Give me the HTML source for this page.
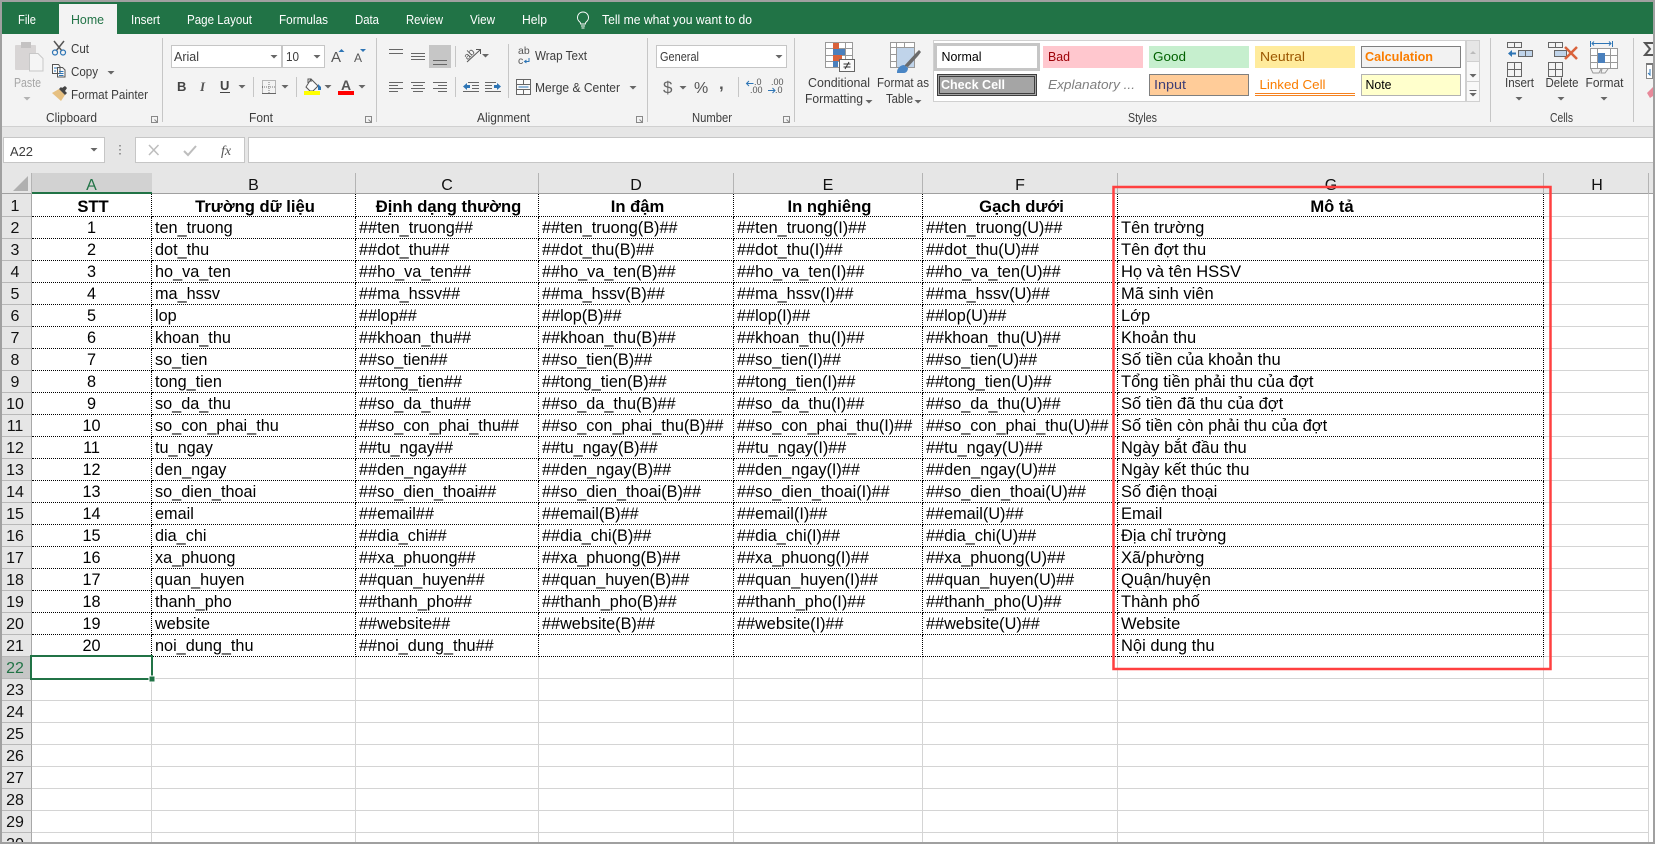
<!DOCTYPE html>
<html><head><meta charset="utf-8"><title>Excel</title>
<style>
html,body{margin:0;padding:0;width:1655px;height:844px;overflow:hidden;background:#fff;font-family:"Liberation Sans","Noto Sans CJK SC",sans-serif}
#g{position:absolute;left:0;top:194px;width:1655px;height:648px;overflow:hidden}
table{position:absolute;left:2px;top:0;border-collapse:separate;border-spacing:0;table-layout:fixed;width:1647px;font-size:16.25px;color:#000}
td{height:22px;padding:2px 0 0 3px;box-sizing:border-box;line-height:19px;white-space:nowrap;border-right:1px solid #d4d4d4;border-bottom:1px solid #d4d4d4}
td:first-child{background:#e6e6e6;border-right:1px solid #a8a8a8;border-bottom:1px solid #b8b8b8;text-align:center;padding:2px 3px 0 0;color:#111;font-size:16px}
tr.r td:not(:first-child):not(:last-child){border-right:1px dotted #000;border-bottom:1px dotted #000}
td:nth-child(8){font-size:16.5px}
tr.h td{height:23px;line-height:18px;padding-top:4px;font-weight:bold;text-align:center;font-size:16.6px}
tr.h td:first-child{font-weight:normal;font-size:16px}
td.c{text-align:center;padding:2px 0 0 0}
td.s{background:#c6c6c6!important;color:#217346!important}
svg{position:absolute;left:0;top:0}
text{font-family:"Liberation Sans",sans-serif;font-size:12.5px;fill:#3c3c3c}
</style></head><body>
<div id="g"><table>
<colgroup><col style="width:30px"><col style="width:120px"><col style="width:204px"><col style="width:183px"><col style="width:195px"><col style="width:189px"><col style="width:195px"><col style="width:426px"><col style="width:105px"></colgroup>
<tr class="r h"><td>1</td><td>STT</td><td>Trường dữ liệu</td><td>Định dạng thường</td><td>In đậm</td><td>In nghiêng</td><td>Gạch dưới</td><td>Mô tả</td><td></td></tr>
<tr class="r"><td>2</td><td class="c">1</td><td>ten_truong</td><td>##ten_truong##</td><td>##ten_truong(B)##</td><td>##ten_truong(I)##</td><td>##ten_truong(U)##</td><td>Tên trường</td><td></td></tr>
<tr class="r"><td>3</td><td class="c">2</td><td>dot_thu</td><td>##dot_thu##</td><td>##dot_thu(B)##</td><td>##dot_thu(I)##</td><td>##dot_thu(U)##</td><td>Tên đợt thu</td><td></td></tr>
<tr class="r"><td>4</td><td class="c">3</td><td>ho_va_ten</td><td>##ho_va_ten##</td><td>##ho_va_ten(B)##</td><td>##ho_va_ten(I)##</td><td>##ho_va_ten(U)##</td><td>Họ và tên HSSV</td><td></td></tr>
<tr class="r"><td>5</td><td class="c">4</td><td>ma_hssv</td><td>##ma_hssv##</td><td>##ma_hssv(B)##</td><td>##ma_hssv(I)##</td><td>##ma_hssv(U)##</td><td>Mã sinh viên</td><td></td></tr>
<tr class="r"><td>6</td><td class="c">5</td><td>lop</td><td>##lop##</td><td>##lop(B)##</td><td>##lop(I)##</td><td>##lop(U)##</td><td>Lớp</td><td></td></tr>
<tr class="r"><td>7</td><td class="c">6</td><td>khoan_thu</td><td>##khoan_thu##</td><td>##khoan_thu(B)##</td><td>##khoan_thu(I)##</td><td>##khoan_thu(U)##</td><td>Khoản thu</td><td></td></tr>
<tr class="r"><td>8</td><td class="c">7</td><td>so_tien</td><td>##so_tien##</td><td>##so_tien(B)##</td><td>##so_tien(I)##</td><td>##so_tien(U)##</td><td>Số tiền của khoản thu</td><td></td></tr>
<tr class="r"><td>9</td><td class="c">8</td><td>tong_tien</td><td>##tong_tien##</td><td>##tong_tien(B)##</td><td>##tong_tien(I)##</td><td>##tong_tien(U)##</td><td>Tổng tiền phải thu của đợt</td><td></td></tr>
<tr class="r"><td>10</td><td class="c">9</td><td>so_da_thu</td><td>##so_da_thu##</td><td>##so_da_thu(B)##</td><td>##so_da_thu(I)##</td><td>##so_da_thu(U)##</td><td>Số tiền đã thu của đợt</td><td></td></tr>
<tr class="r"><td>11</td><td class="c">10</td><td>so_con_phai_thu</td><td>##so_con_phai_thu##</td><td>##so_con_phai_thu(B)##</td><td>##so_con_phai_thu(I)##</td><td>##so_con_phai_thu(U)##</td><td>Số tiền còn phải thu của đợt</td><td></td></tr>
<tr class="r"><td>12</td><td class="c">11</td><td>tu_ngay</td><td>##tu_ngay##</td><td>##tu_ngay(B)##</td><td>##tu_ngay(I)##</td><td>##tu_ngay(U)##</td><td>Ngày bắt đầu thu</td><td></td></tr>
<tr class="r"><td>13</td><td class="c">12</td><td>den_ngay</td><td>##den_ngay##</td><td>##den_ngay(B)##</td><td>##den_ngay(I)##</td><td>##den_ngay(U)##</td><td>Ngày kết thúc thu</td><td></td></tr>
<tr class="r"><td>14</td><td class="c">13</td><td>so_dien_thoai</td><td>##so_dien_thoai##</td><td>##so_dien_thoai(B)##</td><td>##so_dien_thoai(I)##</td><td>##so_dien_thoai(U)##</td><td>Số điện thoại</td><td></td></tr>
<tr class="r"><td>15</td><td class="c">14</td><td>email</td><td>##email##</td><td>##email(B)##</td><td>##email(I)##</td><td>##email(U)##</td><td>Email</td><td></td></tr>
<tr class="r"><td>16</td><td class="c">15</td><td>dia_chi</td><td>##dia_chi##</td><td>##dia_chi(B)##</td><td>##dia_chi(I)##</td><td>##dia_chi(U)##</td><td>Địa chỉ trường</td><td></td></tr>
<tr class="r"><td>17</td><td class="c">16</td><td>xa_phuong</td><td>##xa_phuong##</td><td>##xa_phuong(B)##</td><td>##xa_phuong(I)##</td><td>##xa_phuong(U)##</td><td>Xã/phường</td><td></td></tr>
<tr class="r"><td>18</td><td class="c">17</td><td>quan_huyen</td><td>##quan_huyen##</td><td>##quan_huyen(B)##</td><td>##quan_huyen(I)##</td><td>##quan_huyen(U)##</td><td>Quận/huyện</td><td></td></tr>
<tr class="r"><td>19</td><td class="c">18</td><td>thanh_pho</td><td>##thanh_pho##</td><td>##thanh_pho(B)##</td><td>##thanh_pho(I)##</td><td>##thanh_pho(U)##</td><td>Thành phố</td><td></td></tr>
<tr class="r"><td>20</td><td class="c">19</td><td>website</td><td>##website##</td><td>##website(B)##</td><td>##website(I)##</td><td>##website(U)##</td><td>Website</td><td></td></tr>
<tr class="r"><td>21</td><td class="c">20</td><td>noi_dung_thu</td><td>##noi_dung_thu##</td><td></td><td></td><td></td><td>Nội dung thu</td><td></td></tr>
<tr><td class="s">22</td><td></td><td></td><td></td><td></td><td></td><td></td><td></td><td></td></tr>
<tr><td>23</td><td></td><td></td><td></td><td></td><td></td><td></td><td></td><td></td></tr>
<tr><td>24</td><td></td><td></td><td></td><td></td><td></td><td></td><td></td><td></td></tr>
<tr><td>25</td><td></td><td></td><td></td><td></td><td></td><td></td><td></td><td></td></tr>
<tr><td>26</td><td></td><td></td><td></td><td></td><td></td><td></td><td></td><td></td></tr>
<tr><td>27</td><td></td><td></td><td></td><td></td><td></td><td></td><td></td><td></td></tr>
<tr><td>28</td><td></td><td></td><td></td><td></td><td></td><td></td><td></td><td></td></tr>
<tr><td>29</td><td></td><td></td><td></td><td></td><td></td><td></td><td></td><td></td></tr>
<tr><td>30</td><td></td><td></td><td></td><td></td><td></td><td></td><td></td><td></td></tr>
</table></div>

<svg width="1655" height="844" viewBox="0 0 1655 844" xmlns="http://www.w3.org/2000/svg">
<defs>
<path id="t" d="M-3.5 0h7l-3.5 3.5z" fill="#666"/>
<path id="l" d="M0 0h6v6h-6zM3 3l3 3M4 6h2V4" fill="none" stroke="#888" stroke-width="1"/>
</defs>
<!-- ribbon -->
<rect x="0" y="34" width="1655" height="93" fill="#f3f3f3"/>
<rect x="0" y="126" width="1655" height="1" fill="#d0d0d0"/>
<rect x="0" y="127" width="1655" height="46" fill="#e6e6e6"/>
<rect x="0" y="173" width="1655" height="21" fill="#e6e6e6"/>
<rect x="0" y="2" width="1655" height="32" fill="#217346"/>
<rect x="59" y="4" width="58" height="30" fill="#f3f3f3"/>
<g style="fill:#fff">
<text x="18" y="24" textLength="18" lengthAdjust="spacingAndGlyphs" style="fill:#fff">File</text>
<text x="71" y="24" textLength="33" lengthAdjust="spacingAndGlyphs" style="fill:#217346">Home</text>
<text x="131" y="24" textLength="29" lengthAdjust="spacingAndGlyphs" style="fill:#fff">Insert</text>
<text x="187" y="24" textLength="65" lengthAdjust="spacingAndGlyphs" style="fill:#fff">Page Layout</text>
<text x="279" y="24" textLength="49" lengthAdjust="spacingAndGlyphs" style="fill:#fff">Formulas</text>
<text x="355" y="24" textLength="24" lengthAdjust="spacingAndGlyphs" style="fill:#fff">Data</text>
<text x="406" y="24" textLength="37" lengthAdjust="spacingAndGlyphs" style="fill:#fff">Review</text>
<text x="470" y="24" textLength="25" lengthAdjust="spacingAndGlyphs" style="fill:#fff">View</text>
<text x="522" y="24" textLength="25" lengthAdjust="spacingAndGlyphs" style="fill:#fff">Help</text>
<text x="602" y="24" textLength="150" lengthAdjust="spacingAndGlyphs" style="fill:#fff">Tell me what you want to do</text>
</g>
<path d="M583 12a5.5 5.5 0 0 1 3.3 9.9c-.8.7-1 1.2-1 2.1h-4.6c0-.9-.2-1.4-1-2.1A5.5 5.5 0 0 1 583 12zM581 26h4M581.500 28h3" fill="none" stroke="#fff" stroke-width="1"/>

<!-- separators -->
<g fill="#c6c6c6">
<rect x="162" y="38" width="1" height="84"/><rect x="376" y="38" width="1" height="84"/><rect x="647" y="38" width="1" height="84"/><rect x="794" y="38" width="1" height="84"/><rect x="1490" y="38" width="1" height="84"/><rect x="1633" y="38" width="1" height="84"/>
<rect x="253" y="77" width="1" height="20"/><rect x="296" y="77" width="1" height="20"/>
<rect x="455" y="46" width="1" height="21"/><rect x="455" y="77" width="1" height="20"/><rect x="508" y="44" width="1" height="54"/>
<rect x="738" y="77" width="1" height="20"/>
</g>

<!-- Clipboard -->
<rect x="15" y="45" width="21" height="25" rx="1" fill="#d8d5d5"/>
<rect x="21" y="42" width="10" height="6" fill="#c4c2c2"/>
<path d="M29.500 53.500h8.500l5 5v12.500h-13.500z" fill="#f5f5f5" stroke="#c8c8c8"/>
<text x="14" y="87" textLength="27" lengthAdjust="spacingAndGlyphs" style="fill:#a6a6a6">Paste</text>
<use href="#t" x="27" y="97" opacity=".45"/>
<path d="M54 41l8 10M64 41l-8 10" stroke="#555" stroke-width="1.500" fill="none"/>
<circle cx="55" cy="52.500" r="2.500" fill="none" stroke="#2e75b5" stroke-width="1.200"/><circle cx="63" cy="52.500" r="2.500" fill="none" stroke="#2e75b5" stroke-width="1.200"/>
<text x="71" y="53" textLength="18" lengthAdjust="spacingAndGlyphs">Cut</text>
<path d="M52.500 64.500h6l1.500 2v7h-7.500zM57.500 67.500h5l2.500 2.500v7h-7.500z" fill="#fafafa" stroke="#555"/>
<path d="M54 68h3M54 71h2M59 71.500h4.500M59 73.500h4.500M59 75.500h4.500" stroke="#2e75b5" fill="none"/>
<text x="71" y="76" textLength="27" lengthAdjust="spacingAndGlyphs">Copy</text>
<use href="#t" x="111" y="71"/>
<path d="M52 93l7-4 6 6-4 6z" fill="#e6c081"/>
<path d="M59 89l6 6 2-2-2-2 2-3-2-2-3 2-1-1z" fill="#444"/>
<text x="71" y="99" textLength="77" lengthAdjust="spacingAndGlyphs">Format Painter</text>
<text x="46" y="122" textLength="51" lengthAdjust="spacingAndGlyphs">Clipboard</text>
<use href="#l" x="151.500" y="116.500"/>

<!-- Font -->
<rect x="171.500" y="45.500" width="110" height="22" fill="#fff" stroke="#c6c6c6"/>
<rect x="282.500" y="45.500" width="42" height="22" fill="#fff" stroke="#c6c6c6"/>
<text x="174" y="61" textLength="25" lengthAdjust="spacingAndGlyphs">Arial</text>
<use href="#t" x="274" y="55"/>
<text x="286" y="61" textLength="13" lengthAdjust="spacingAndGlyphs">10</text>
<use href="#t" x="317" y="55"/>
<text x="331" y="62" style="font-size:15px;fill:#555">A</text>
<path d="M338.500 52l3-3 3 3z" fill="#2e75b5"/>
<text x="354" y="62" style="font-size:12px;fill:#555">A</text>
<path d="M360 49h6l-3 3z" fill="#2e75b5"/>
<text x="177" y="91" style="font-size:13px;font-weight:bold;fill:#444">B</text>
<text x="200" y="91" style="font-size:13px;font-style:italic;font-family:'Liberation Serif',serif;font-weight:bold;fill:#555">I</text>
<text x="220" y="90" style="font-size:13px;font-weight:bold;fill:#444">U</text>
<rect x="220" y="92" width="10" height="1" fill="#444"/>
<use href="#t" x="242" y="85"/>
<path d="M262.500 80.500h13v13h-13zM269 80v14M262 87h14" fill="none" stroke="#777" stroke-dasharray="1 1"/>
<rect x="262" y="93" width="14" height="1" fill="#666"/>
<use href="#t" x="285" y="85"/>
<path d="M311 79l7 7-5 5h-3l-4-4zM311 79v-0M308 83v-4h3v3" fill="#fafafa" stroke="#555"/>
<path d="M318 84l3 3v3h-3z" fill="#2e75b5"/>
<rect x="304" y="91" width="16" height="4" fill="#ffff00"/>
<use href="#t" x="328" y="85"/>
<text x="341" y="90" style="font-size:14px;font-weight:bold;fill:#555">A</text>
<rect x="338" y="91" width="16" height="4" fill="#ff0000"/>
<use href="#t" x="362" y="85"/>
<text x="249" y="122" textLength="24" lengthAdjust="spacingAndGlyphs">Font</text>
<use href="#l" x="365.500" y="116.500"/>

<!-- Alignment -->
<rect x="429" y="45" width="22" height="23" fill="#c6c6c6"/>
<path d="M389 49.500h14M389 53.500h14M411 53.500h14M411 56.500h14M411 59.500h14M433 60.500h14M433 64.500h14M389 82.500h14M389 85.500h9M389 88.500h14M389 91.500h9M411 82.500h14M413 85.500h10M411 88.500h14M413 91.500h10M433 82.500h14M438 85.500h9M433 88.500h14M438 91.500h9" stroke="#666" fill="none"/>
<g transform="rotate(-45 471 54)"><text x="464" y="56" style="font-size:10px;fill:#555">ab</text></g>
<path d="M467 62l13-12M476 49.500h4.500v4.500" stroke="#555" fill="none"/>
<use href="#t" x="485.500" y="54"/>
<path d="M468 82.500h11M472 85.500h7M472 88.500h7M463 91.500h16" stroke="#666" fill="none"/>
<path d="M463 86.500l4-3.500v2h3v3h-3v2z" fill="#2e75b5"/>
<path d="M485 82.500h11M485 85.500h7M485 88.500h7M485 91.500h16" stroke="#666" fill="none"/>
<path d="M501 86.500l-4-3.500v2h-3v3h3v2z" fill="#2e75b5"/>
<text x="518" y="54" style="font-size:10.500px;fill:#555">ab</text>
<text x="518" y="64" style="font-size:10.500px;fill:#555">c</text>
<path d="M529 58v3.500h-4M526.500 60l-2 1.500 2 1.500" stroke="#2e75b5" fill="none"/>
<text x="535" y="60" textLength="52" lengthAdjust="spacingAndGlyphs">Wrap Text</text>
<path d="M516.500 79.500h14v15h-14zM516.500 84.500h14M516.500 89.500h14M523.500 79.500v5M523.500 89.500v5" fill="#fafafa" stroke="#666"/>
<path d="M518.500 87h10" stroke="#2e75b5"/>
<text x="535" y="92" textLength="85" lengthAdjust="spacingAndGlyphs">Merge &amp; Center</text>
<use href="#t" x="633" y="86"/>
<text x="477" y="122" textLength="53" lengthAdjust="spacingAndGlyphs">Alignment</text>
<use href="#l" x="636.500" y="116.500"/>

<!-- Number -->
<rect x="656.500" y="45.500" width="130" height="22" fill="#fff" stroke="#c6c6c6"/>
<text x="660" y="61" textLength="39" lengthAdjust="spacingAndGlyphs">General</text>
<use href="#t" x="779" y="55"/>
<text x="663" y="93" style="font-size:17px;fill:#666">$</text>
<use href="#t" x="683" y="86"/>
<text x="694" y="93" style="font-size:16px;fill:#555">%</text>
<text x="719" y="89" style="font-size:17px;font-weight:bold;fill:#555">,</text>
<text x="754" y="85" style="font-size:9px;fill:#555">.0</text><text x="750" y="93" style="font-size:9px;fill:#555">.00</text>
<path d="M746.500 83.500h7M749 81l-2.500 2.500 2.500 2.500" stroke="#2e75b5" fill="none"/>
<text x="771" y="85" style="font-size:9px;fill:#555">.00</text><text x="775" y="93" style="font-size:9px;fill:#555">.0</text>
<path d="M768 90.500h7M772.500 88l2.500 2.500-2.500 2.500" stroke="#2e75b5" fill="none"/>
<text x="692" y="122" textLength="40" lengthAdjust="spacingAndGlyphs">Number</text>
<use href="#l" x="783.500" y="116.500"/>

<!-- Conditional formatting -->
<path d="M825.500 42.500h27v25h-27zM825.500 48.500h27M825.500 55.500h27M825.500 61.500h27M833.500 42.500v25M845.500 42.500v25" fill="#fff" stroke="#999"/>
<rect x="833" y="43" width="6" height="6" fill="#d9623b"/>
<rect x="833" y="49" width="12" height="6" fill="#4a80bd"/>
<rect x="833" y="55" width="9" height="6" fill="#d9623b"/>
<rect x="833" y="61" width="5" height="6" fill="#4a80bd"/>
<rect x="839.500" y="59.500" width="15" height="12" fill="#fafafa" stroke="#666"/>
<path d="M843.500 64h7M843.500 67h7M849 62l-4 7" stroke="#333" fill="none"/>
<text x="808" y="87" textLength="62" lengthAdjust="spacingAndGlyphs">Conditional</text>
<text x="805" y="103" textLength="58" lengthAdjust="spacingAndGlyphs">Formatting</text>
<use href="#t" x="869" y="100" />
<!-- Format as table -->
<path d="M890.500 42.500h24v25h-24zM890.500 47.500h24M890.500 54.500h24M890.500 61.500h24M896.500 42.500v25M904.500 42.500v25" fill="#fff" stroke="#999"/>
<rect x="897" y="48" width="17" height="19" fill="#c0d4ea"/>
<path d="M904 66l12-13 3-3 2 2-3 4-10 11z" fill="#6b6b6b"/>
<path d="M897 72c0-4 4-7 7-7l4 3c0 3-2 5-4 5h-7z" fill="#4a86c5"/>
<text x="877" y="87" textLength="52" lengthAdjust="spacingAndGlyphs">Format as</text>
<text x="886" y="103" textLength="27" lengthAdjust="spacingAndGlyphs">Table</text>
<use href="#t" x="918" y="100"/>

<!-- Styles gallery -->
<rect x="933.500" y="40.500" width="532" height="61" fill="#fff" stroke="#d0d0d0"/>
<rect x="935.500" y="44.500" width="103" height="25" fill="#fff" stroke="#c6c6c6" stroke-width="3"/>
<text x="941.500" y="61" textLength="40" lengthAdjust="spacingAndGlyphs" style="fill:#000">Normal</text>
<rect x="1043" y="46" width="100" height="22" fill="#ffc7ce"/>
<text x="1048" y="61" textLength="22" lengthAdjust="spacingAndGlyphs" style="fill:#9c0006">Bad</text>
<rect x="1149" y="46" width="100" height="22" fill="#c6efce"/>
<text x="1153" y="61" textLength="33" lengthAdjust="spacingAndGlyphs" style="fill:#006100">Good</text>
<rect x="1255" y="46" width="100" height="22" fill="#ffeb9c"/>
<text x="1260" y="61" textLength="45" lengthAdjust="spacingAndGlyphs" style="fill:#9c5700">Neutral</text>
<rect x="1361.500" y="46.500" width="99" height="21" fill="#f2f2f2" stroke="#7f7f7f"/>
<text x="1365" y="61" textLength="68" lengthAdjust="spacingAndGlyphs" style="fill:#fa7d00;font-weight:bold">Calculation</text>
<rect x="937" y="74" width="100" height="22" fill="#3f3f3f"/>
<rect x="938" y="75" width="98" height="20" fill="#a5a5a5"/>
<rect x="939.500" y="76.500" width="95" height="17" fill="#a5a5a5" stroke="#3f3f3f"/>
<text x="941" y="89" textLength="64" lengthAdjust="spacingAndGlyphs" style="fill:#fff;font-weight:bold">Check Cell</text>
<text x="1048" y="89" textLength="87" lengthAdjust="spacingAndGlyphs" style="fill:#7f7f7f;font-style:italic">Explanatory ...</text>
<rect x="1149.500" y="74.500" width="99" height="21" fill="#ffcc99" stroke="#7f7f7f"/>
<text x="1154" y="89" textLength="32" lengthAdjust="spacingAndGlyphs" style="fill:#3f3f76">Input</text>
<text x="1259.500" y="89" textLength="66" lengthAdjust="spacingAndGlyphs" style="fill:#fa7d00">Linked Cell</text>
<path d="M1255 93.500h100M1255 95.500h100" stroke="#f58220"/>
<rect x="1361.500" y="74.500" width="99" height="21" fill="#ffffcc" stroke="#b2b2b2"/>
<text x="1365.500" y="89" textLength="26" lengthAdjust="spacingAndGlyphs" style="fill:#000">Note</text>
<rect x="1466.500" y="40.500" width="13" height="21" fill="#e6e6e6" stroke="#d0d0d0"/>
<rect x="1466.500" y="61.500" width="13" height="20" fill="#f8f8f8" stroke="#d0d0d0"/>
<rect x="1466.500" y="81.500" width="13" height="20" fill="#f8f8f8" stroke="#d0d0d0"/>
<path d="M1473 51l-3 3h6z" fill="#bbb"/>
<use href="#t" x="1473" y="75" transform="translate(0 -1)"/>
<path d="M1469.500 90.500h7" stroke="#666"/><use href="#t" x="1473" y="93"/>
<text x="1128" y="122" textLength="29" lengthAdjust="spacingAndGlyphs">Styles</text>

<!-- Cells -->
<path d="M1507.500 42.500h7v5h-7zM1514.500 42.500h7v5h-7zM1507.500 62.500v14h14v-14zM1507.500 69.500h14M1514.500 62.500v14" fill="none" stroke="#666"/>
<rect x="1518.500" y="50.500" width="14" height="6" fill="#c0d4ea" stroke="#666"/>
<path d="M1525.500 50v7" stroke="#666"/>
<path d="M1508 53.500l4-3.500v2.500h4v2h-4v2.500z" fill="#2e75b5"/>
<text x="1505" y="87" textLength="29" lengthAdjust="spacingAndGlyphs">Insert</text>
<use href="#t" x="1519" y="97"/>
<path d="M1548.500 42.500h7v5h-7zM1555.500 42.500h7v5h-7zM1548.500 62.500v14h14v-14h-14zM1548.500 69.500h14M1555.500 62.500v14" fill="none" stroke="#666"/>
<rect x="1554.500" y="50.500" width="12" height="6" fill="#c0d4ea" stroke="#666"/>
<path d="M1565 47l12 12M1577 47l-12 12" stroke="#d9623b" stroke-width="2.500" fill="none"/>
<text x="1545.500" y="87" textLength="33" lengthAdjust="spacingAndGlyphs">Delete</text>
<use href="#t" x="1561" y="97"/>
<path d="M1590.500 48.500h27v20h-27zM1590.500 55.500h27M1590.500 62.500h27M1597.500 48.500v20M1610.500 48.500v20" fill="#fff" stroke="#999"/>
<rect x="1598" y="53" width="7" height="10" fill="#4a80bd"/>
<path d="M1591 69l2 4h6l2-4M1602 69l-1 4h4l3-4" fill="none" stroke="#999"/>
<path d="M1590.500 41v6M1612.500 41v6M1592 43.500h19M1594 41.500l-2 2 2 2M1609 41.500l2 2-2 2" stroke="#2e75b5" fill="none"/>
<text x="1585.500" y="87" textLength="38" lengthAdjust="spacingAndGlyphs">Format</text>
<use href="#t" x="1604" y="97"/>
<text x="1550" y="122" textLength="23" lengthAdjust="spacingAndGlyphs">Cells</text>
<path d="M1653 43h-8l5 6-5 6h8" fill="none" stroke="#555" stroke-width="2"/>
<path d="M1646.500 63.500h6v15h-6z" fill="#fff" stroke="#888"/><path d="M1646 63h7v2h-7z" fill="#777"/>
<path d="M1650 69v6l-2-2" stroke="#2e75b5" fill="none"/>
<path d="M1647 93l6-6v9l-3 2z" fill="#e8899a"/>

<!-- Formula bar -->
<rect x="3.500" y="137.500" width="101" height="25" fill="#fff" stroke="#c6c6c6"/>
<text x="10" y="156" textLength="23" lengthAdjust="spacingAndGlyphs" style="font-size:13px">A22</text>
<use href="#t" x="94" y="148"/>
<path d="M120 145v1.500M120 149v1.500M120 153v1.500" stroke="#999" stroke-width="2" fill="none"/>
<rect x="135.500" y="137.500" width="109" height="25" fill="#fff" stroke="#c6c6c6"/>
<path d="M149 145l9.500 10M158.500 145l-9.500 10" stroke="#bdbdbd" stroke-width="1.500" fill="none"/>
<path d="M184 151l4 4 8-9" stroke="#bdbdbd" stroke-width="2" fill="none"/>
<text x="221" y="155" style="font-family:'Liberation Serif',serif;font-style:italic;font-size:14px;fill:#555">fx</text>
<rect x="248.500" y="137.500" width="1410" height="25" fill="#fff" stroke="#c6c6c6"/>

<!-- Column headers -->
<path d="M28 176v15h-15z" fill="#b0b0b0"/>
<rect x="32" y="173" width="120" height="21" fill="#d2d2d2"/>
<rect x="32" y="192" width="120" height="2" fill="#217346"/>
<rect x="152" y="193" width="1503" height="1" fill="#a0a0a0"/>
<rect x="2" y="193" width="30" height="1" fill="#a0a0a0"/>
<g fill="#b4b4b4"><rect x="31" y="173" width="1" height="21"/><rect x="355" y="173" width="1" height="21"/><rect x="538" y="173" width="1" height="21"/><rect x="733" y="173" width="1" height="21"/><rect x="922" y="173" width="1" height="21"/><rect x="1117" y="173" width="1" height="21"/><rect x="1543" y="173" width="1" height="21"/><rect x="1648" y="173" width="1" height="21"/></g>
<g text-anchor="middle">
<text x="91.500" y="190" style="font-size:16px;fill:#217346">A</text>
<text x="253.500" y="190" style="font-size:16px;fill:#111">B</text>
<text x="447" y="190" style="font-size:16px;fill:#111">C</text>
<text x="636" y="190" style="font-size:16px;fill:#111">D</text>
<text x="828" y="190" style="font-size:16px;fill:#111">E</text>
<text x="1020" y="190" style="font-size:16px;fill:#111">F</text>
<text x="1331" y="190" style="font-size:16px;fill:#111">G</text>
<text x="1597" y="190" style="font-size:16px;fill:#111">H</text>
</g>

<!-- Selection -->
<rect x="31" y="656" width="121" height="23" fill="none" stroke="#217346" stroke-width="2"/>
<rect x="149" y="676" width="6" height="6" fill="#217346" stroke="#fff" stroke-width="1"/>

<!-- Red annotation -->
<rect x="1113.500" y="187" width="437" height="482" fill="none" stroke="#ff4040" stroke-width="2.500"/>

<!-- Outer border -->
<rect x="0" y="0" width="1655" height="2" fill="#a0a0a0"/>
<rect x="0" y="0" width="2" height="844" fill="#a0a0a0"/>
<rect x="1653" y="0" width="2" height="844" fill="#a0a0a0"/>
<rect x="0" y="842" width="1655" height="2" fill="#a0a0a0"/>
</svg>
</body></html>
